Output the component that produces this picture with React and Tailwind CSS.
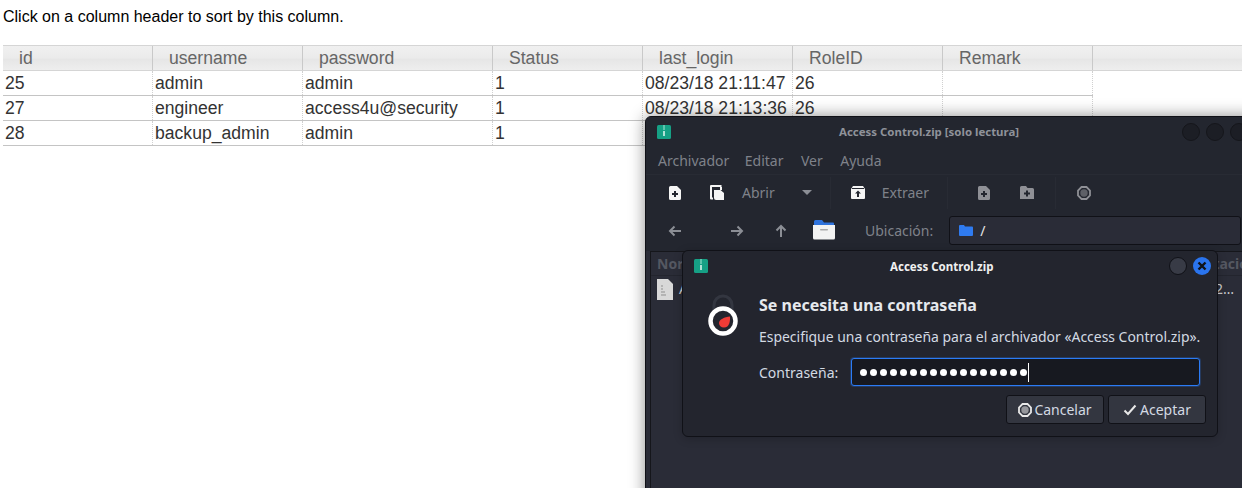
import React from 'react';

const columns = [
    { name: "id", width: "w-[150px]" },
    { name: "username", width: "w-[150px]" },
    { name: "password", width: "w-[190px]" },
    { name: "Status", width: "w-[150px]" },
    { name: "last_login", width: "w-[150px]" },
    { name: "RoleID", width: "w-[150px]" },
    { name: "Remark", width: "w-[150px]" },
];

const rows = [
    ["25", "admin", "admin", "1", "08/23/18 21:11:47", "26", ""],
    ["27", "engineer", "access4u@security", "1", "08/23/18 21:13:36", "26", ""],
    ["28", "backup_admin", "admin", "1", "", "", ""],
];

const ZipIcon = () => (
    <svg width="14" height="14" viewBox="0 0 14 14" className="shrink-0">
        <rect width="14" height="14" rx="1.5" fill="#16a085" />
        <rect x="6" y="0" width="2" height="5" fill="#5fc4ad" />
        <rect x="6.2" y="6" width="1.6" height="5" fill="#d8f3ec" />
    </svg>
);

const FilePlus = ({ color }) => (
    <svg width="12" height="14" viewBox="0 0 12 14">
        <path d="M1.5 0H8L12 4V12.5A1.5 1.5 0 0 1 10.5 14H1.5A1.5 1.5 0 0 1 0 12.5V1.5A1.5 1.5 0 0 1 1.5 0Z" fill={color} />
        <path d="M5 5H7V7H9V9H7V11H5V9H3V7H5Z" fill="#23262f" />
    </svg>
);

const FolderPlus = ({ color }) => (
    <svg width="14" height="13" viewBox="0 0 14 13">
        <path d="M0 1.5A1.5 1.5 0 0 1 1.5 0H6L7.5 2H12.5A1.5 1.5 0 0 1 14 3.5V13H0Z" fill={color} />
        <path d="M6 4.5H8V6.5H10V8.5H8V10.5H6V8.5H4V6.5H6Z" fill="#23262f" />
    </svg>
);

const OpenIcon = () => (
    <svg width="14" height="15" viewBox="0 0 14 15">
        <path d="M1 0H11.5V2H2V12.5H3V14.5H1A1 1 0 0 1 0 13.5V1A1 1 0 0 1 1 0Z" fill="#f5f5f5" />
        <path d="M4 5H10.5L14 8V15H6A2 2 0 0 1 4 13Z" fill="#f5f5f5" />
        <rect x="10" y="2" width="2" height="3" fill="#f5f5f5" />
    </svg>
);

const ExtractIcon = () => (
    <svg width="14" height="13" viewBox="0 0 14 13">
        <path d="M2 0H12L14 3V12A1 1 0 0 1 13 13H1A1 1 0 0 1 0 12V3Z" fill="#f5f5f5" />
        <rect x="1" y="2" width="12" height="1" fill="#23262f" />
        <path d="M7 4.5L10 7.5H8V11H6V7.5H4Z" fill="#23262f" />
    </svg>
);

const RingIcon = ({ color, size = 14 }) => (
    <svg width={size} height={size} viewBox="0 0 14 14">
        <path d="M4.5 1H9.5L13 4.5V9.5L9.5 13H4.5L1 9.5V4.5Z" fill="none" stroke={color} strokeWidth="1.8" />
        <circle cx="7" cy="7" r="3.7" fill={color} fillOpacity="0.55" />
    </svg>
);

const Arrow = ({ dir }) => {
    const rotate = { left: "rotate-180", right: "", up: "-rotate-90" }[dir];
    return (
        <svg width="14" height="14" viewBox="0 0 14 14" className={rotate}>
            <path d="M1 7H12M7.5 2.5L12 7L7.5 11.5" fill="none" stroke="#8b8e95" strokeWidth="2" />
        </svg>
    );
};

const BlueFolder = () => (
    <svg width="14" height="11" viewBox="0 0 14 11">
        <path d="M0 1A1 1 0 0 1 1 0H5L6 1.5H13A1 1 0 0 1 14 2.5V10A1 1 0 0 1 13 11H1A1 1 0 0 1 0 10Z" fill="#2f7bf0" />
    </svg>
);

const BigFolder = () => (
    <svg width="22" height="20" viewBox="0 0 22 20">
        <path d="M1 1.5A1.5 1.5 0 0 1 2.5 0H9L11 2.5H20A1 1 0 0 1 21 3.5V8H1Z" fill="#2f73dc" />
        <path d="M0 5H22V18A1.5 1.5 0 0 1 20.5 19.5H1.5A1.5 1.5 0 0 1 0 18Z" fill="#f2f2f2" />
        <rect x="7" y="9" width="8" height="1.5" rx="0.7" fill="#a9a9a9" />
    </svg>
);

const LockIcon = () => (
    <svg width="34" height="46" viewBox="0 0 34 46">
        <path d="M8 20V12A9 9 0 0 1 26 12V20" fill="none" stroke="#333640" strokeWidth="3" />
        <circle cx="17" cy="28" r="12.5" fill="#23252e" stroke="#ffffff" strokeWidth="4.5" />
        <path d="M24 23.5C24.3 28 23.5 34.5 18 34.5C15 34.5 13 32.5 13 30C13 26.5 18.5 24 24 23.5Z" fill="#ef3b36" />
    </svg>
);

const Dots = () => (
    <div className="flex items-center gap-[3px]">
        {Array.from({ length: 17 }).map((_, i) => (
            <span key={i} className="w-[7px] h-[7px] rounded-full bg-white" />
        ))}
    </div>
);

const Divider = () => <div className="w-px h-8 bg-[#282b34]" />;

const ArchiveWindow = () => (
    <div className="absolute left-[645px] top-[116px] w-[640px] h-[400px] bg-[#2a2c37] border border-[#101117] rounded-tl-md shadow-[0_0_16px_rgba(0,0,0,0.45)] text-[14px]" style={{ fontFamily: '"Noto Sans", sans-serif' }}>
        {/* Title bar */}
        <div className="h-[30px] bg-[#23262f] flex items-center pl-[11px] relative rounded-tl-md">
            <ZipIcon />
            <span className="absolute left-[193px] top-[6px] text-[11.45px] font-bold text-[#8f929a] whitespace-nowrap">Access Control.zip [solo lectura]</span>
            <div className="absolute left-[536px] top-[6px] flex gap-[6px]">
                <span className="w-[18px] h-[18px] rounded-full bg-[#1c1e25] border border-[#15161b]" />
                <span className="w-[18px] h-[18px] rounded-full bg-[#1c1e25] border border-[#15161b]" />
                <span className="w-[18px] h-[18px] rounded-full bg-[#1c1e25] border border-[#15161b]" />
            </div>
        </div>

        {/* Menu */}
        <div className="h-[28px] pb-[1px] bg-[#23262f] flex items-center pl-[12px] text-[#7f828a] border-b border-[#282b34]">
            <span>Archivador</span>
            <span className="ml-[15.5px]">Editar</span>
            <span className="ml-[17.5px]">Ver</span>
            <span className="ml-[17.5px]">Ayuda</span>
        </div>

        {/* Toolbar */}
        <div className="h-[35px] bg-[#23262f] flex items-center pl-[23px] text-[#7f828a]">
            <FilePlus color="#f5f5f5" />
            <div className="ml-[29px]"><OpenIcon /></div>
            <span className="ml-[18px]">Abrir</span>
            <span className="ml-[27px] w-0 h-0 border-x-[5px] border-x-transparent border-t-[5px] border-t-[#8b8e95]" />
            <div className="ml-[18px] mr-[20px]"><Divider /></div>
            <ExtractIcon />
            <span className="ml-[17px]">Extraer</span>
            <div className="ml-[18px] mr-[30px]"><Divider /></div>
            <FilePlus color="#8f9096" />
            <div className="ml-[30px]"><FolderPlus color="#8f9096" /></div>
            <div className="ml-[21px] mr-[21px]"><Divider /></div>
            <RingIcon color="#8f9096" />
        </div>

        {/* Location */}
        <div className="h-[41px] bg-[#23262f] flex items-center pl-[22px] text-[#7f828a]">
            <Arrow dir="left" />
            <div className="ml-[48px]"><Arrow dir="right" /></div>
            <div className="ml-[30px]"><Arrow dir="up" /></div>
            <div className="ml-[25px] mb-[1px]"><BigFolder /></div>
            <span className="ml-[30px]">Ubicación:</span>
            <div className="ml-[16px] w-[292px] h-[29px] bg-[#2a2c37] border border-[#101117] rounded-[3px] flex items-center pl-[9px] gap-[7px] text-[#e6e6e6]">
                <BlueFolder />
                <span>/</span>
            </div>
        </div>

        {/* File list behind the dialog */}
        <div className="border-t border-l border-[#15161b] ml-[4px] h-[265px]">
            <div className="h-[24px] pb-[1px] border-b border-[#23252e] pl-[6px] flex items-center font-bold text-[#555862] whitespace-nowrap">
                <span>Nor</span>
                <span className="ml-[530px]">tacic</span>
            </div>
            <div className="h-[26px] pl-[6px] flex items-center text-[#c8c9cc] whitespace-nowrap">
                <svg width="16" height="21" viewBox="0 0 16 21" className="shrink-0">
                    <path d="M0 0H11L16 5V21H0Z" fill="#d8d8d8" />
                    <path d="M4 7H6M4 10H6M4 13H8M4 16H9" stroke="#8f8f8f" strokeWidth="1" />
                </svg>
                <span className="ml-[6px] -mt-[2px]">A</span>
                <span className="ml-[519px] -mt-[2px]">02…</span>
            </div>
        </div>
    </div>
);

const PasswordDialog = () => (
    <div className="absolute left-[682px] top-[250px] w-[536px] h-[187px] bg-[#23252e] border border-[#101117] rounded-md shadow-[0_2px_10px_rgba(0,0,0,0.2)] text-[14px] text-[#d3dae3]" style={{ fontFamily: '"Noto Sans", sans-serif' }}>
        <div className="h-[30px] flex items-center pl-[11px] relative">
            <ZipIcon />
            <span className="absolute left-[207px] top-[7px] text-[11.5px] font-bold text-[#f0f0f0] whitespace-nowrap">Access Control.zip</span>
            <span className="absolute left-[486px] top-[6px] w-[18px] h-[18px] rounded-full bg-[#383b46] border border-[#101117]" />
            <span className="absolute left-[510px] top-[6px] w-[18px] h-[18px] rounded-full bg-[#2a74ee] flex items-center justify-center">
                <svg width="10" height="10" viewBox="0 0 10 10">
                    <path d="M1.5 1.5L8.5 8.5M8.5 1.5L1.5 8.5" stroke="#10131a" strokeWidth="2.4" />
                </svg>
            </span>
        </div>

        <div className="flex pl-[23px] pt-[13px]">
            <div className="-mt-[1px]"><LockIcon /></div>
            <div className="ml-[19px] flex flex-col">
                <span className="text-[16px] leading-[22px] font-bold text-[#e6e9ed]">Se necesita una contraseña</span>
                <span className="mt-[11px] leading-[20px] whitespace-nowrap text-[13.95px]">Especifique una contraseña para el archivador «Access Control.zip».</span>
            </div>
        </div>

        <div className="flex items-center pl-[76px] mt-[11px]">
            <span>Contraseña:</span>
            <div className="ml-[13px] w-[349px] h-[28px] bg-[#171920] border border-[#2b7bf5] rounded-[3px] shadow-[0_0_0_1px_rgba(43,123,245,0.25)] flex items-center pl-[8px]">
                <Dots />
                <span className="w-px h-[19px] bg-white ml-[1px]" />
            </div>
        </div>

        <div className="flex justify-end gap-[4px] pr-[11px] mt-[9px]">
            <button className="w-[98px] h-[29px] bg-[#333640] border border-[#101117] rounded-[3px] flex items-center justify-center gap-[2px]">
                <RingIcon color="#e8e8e8" />
                <span>Cancelar</span>
            </button>
            <button className="w-[98px] h-[29px] bg-[#333640] border border-[#101117] rounded-[3px] flex items-center justify-center gap-[3px]">
                <svg width="14" height="12" viewBox="0 0 14 12">
                    <path d="M1.5 6.5L5 10L12.5 1.5" fill="none" stroke="#e8e8e8" strokeWidth="2" />
                </svg>
                <span>Aceptar</span>
            </button>
        </div>
    </div>
);

export default function App() {
    return (
        <div className="relative w-[1242px] h-[488px] overflow-hidden bg-white pl-[3px]" style={{ fontFamily: '"Liberation Sans", Arial, sans-serif' }}>
            <p className="text-[16px] leading-[18px] pt-[8px] text-black">Click on a column header to sort by this column.</p>

            {/* Sortable table: the header strip runs on to the page edge, the rows stop at the last column */}
            <div className="mt-[19px] text-[17.6px] text-[#333]">
                <div className="flex h-[26px] border-y border-[#d5d5d5] bg-[linear-gradient(#f0f0f0_0%,#ebebeb_50%,#e6e6e6_55%,#eeeeee_100%)] text-[#666]">
                    {columns.map((col) => (
                        <div key={col.name} className={`${col.width} pl-[16px] leading-[24px] border-r border-[#c9c9c9]`}>{col.name}</div>
                    ))}
                </div>
                {rows.map((row) => (
                    <div key={row[0]} className="flex w-[1090px] h-[25px] border-b border-[#c4c4c4]">
                        {row.map((cell, i) => (
                            <div key={i} className={`${columns[i].width} pl-[2px] leading-[24px] border-r border-dotted border-[#d0d0d0]`}>{cell}</div>
                        ))}
                    </div>
                ))}
            </div>

            <ArchiveWindow />
            <PasswordDialog />
        </div>
    );
}
